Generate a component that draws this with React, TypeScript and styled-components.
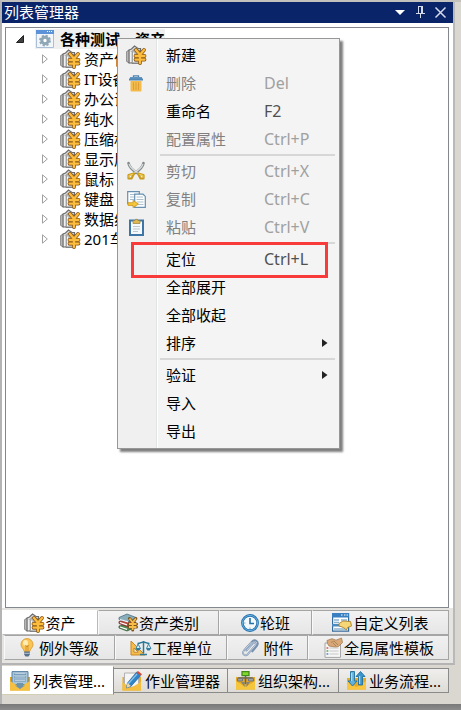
import React from "react";
import styled, { createGlobalStyle, css } from "styled-components";

const GlobalStyle = createGlobalStyle`
  *, *::before, *::after { box-sizing: border-box; }
  body {
    margin: 0;
    background: #dad7d0;
    font-family: "Noto Sans", "Noto Sans CJK SC", sans-serif;
    font-size: 15px;
    line-height: 20px;
    color: #000;
  }
  button {
    font: inherit;
    color: inherit;
    border: 0;
    padding: 0;
    background: none;
    text-align: left;
  }
  ul { list-style: none; margin: 0; padding: 0; }
`;

/* ---------- icons ---------- */

const Svg = styled.svg`
  display: block;
  flex: none;
  overflow: visible;
`;

type IconProps = { size?: number };

const AssetIcon = ({ size = 20 }: IconProps) => (
  <Svg width={size} height={size} viewBox="0 0 20 20" fill="none" aria-hidden="true">
    <path d="M.7 6.500 3.500 5v13L.7 16.500z" fill="#c4c4c4" stroke="#808080" />
    <path d="M3 5 5.500 4 8.500 1l3.500 2.500h2.500V18H3z" fill="#dcdcdc" stroke="#6c6c6c" strokeWidth="1.200" />
    <path d="M6 6.500 8.500 4l5 1.500V18.500H6z" fill="#b9b9b9" stroke="#777" strokeWidth=".8" />
    <path d="M4.800 7v10M7.600 7.500V17" stroke="#f5f5f5" strokeWidth="1.300" />
    <path d="m10 5 4 4.800L18 5M9.500 11h9M9.500 14.600h9M14 10v8" stroke="#8a5716" strokeWidth="3.800" strokeLinejoin="round" strokeLinecap="round" />
    <path d="m10 5 4 4.800L18 5M9.500 11h9M9.500 14.600h9M14 10v8" stroke="#fcbc3c" strokeWidth="2.300" strokeLinejoin="round" strokeLinecap="round" />
  </Svg>
);

const GearWindowIcon = () => (
  <Svg width="18" height="18" viewBox="0 0 18 18" aria-hidden="true">
    <path d="M.5.5h17v17H.5z" fill="#f3f6f9" stroke="#a9bfd8" />
    <path d="M0 0h18v4H0z" fill="#5b92d8" />
    <path d="M11 1.5h1M13 1.5h1M15 1.5h1" stroke="#fff" />
    <circle cx="9" cy="10.500" r="5" fill="none" stroke="#8fa6b5" strokeWidth="1.800" strokeDasharray="2.200 1.720" />
    <circle cx="9" cy="10.500" r="3.200" fill="#fff" stroke="#8fa6b5" strokeWidth="3" />
  </Svg>
);

const TrashIcon = () => (
  <Svg width="14" height="17" viewBox="0 0 14 17" aria-hidden="true">
    <path d="M4.5 2V.8h5V2" fill="none" stroke="#4d83ad" strokeWidth="1.3" />
    <path d="M1 2h12v3H1z" fill="#5e94bf" />
    <path d="M0 3.500h14v2H0z" fill="#4f87b2" />
    <path d="M1.500 6h11v9.500a1 1 0 0 1-1 1h-9a1 1 0 0 1-1-1z" fill="#f3ba4c" />
    <path d="M4.500 7.500V15M7 7.500V15M9.500 7.500V15" stroke="#dc9f35" />
  </Svg>
);

const ScissorsIcon = () => (
  <Svg width="18" height="18" viewBox="0 0 18 18" fill="none" aria-hidden="true">
    <path d="M1.500 1c.5 4 5 8 10 11M16.500 1c-.5 4-5 8-10 11" stroke="#858b8b" strokeWidth="2.600" strokeLinecap="round" />
    <path d="M2 2c1 3 5 6.600 9.400 9.200M16 2c-1 3-5 6.600-9.400 9.200" stroke="#d9dddd" strokeWidth="1.200" />
    <path d="M7 11.500 1.500 13v3.500h3zM11 11.500l5.500 1.500v3.500h-3z" stroke="#c99a1c" strokeWidth="2.200" strokeLinejoin="round" />
    <path d="M6.500 12 2 13.300v2.400M11.500 12l4.500 1.300v2.400" stroke="#f0cd4b" />
  </Svg>
);

const CopyIcon = () => (
  <Svg width="19" height="17" viewBox="0 0 19 17" fill="none" aria-hidden="true">
    <path d="M.7.7h11.600v12H.7z" fill="#fff" stroke="#6790b0" strokeWidth="1.200" />
    <path d="M3 3.500h6M3 6h5M3 8.500h4" stroke="#a9bccb" />
    <path d="M7.7 3.200h8.300l2.300 2.200v10.900H7.700z" fill="#fff" stroke="#6790b0" strokeWidth="1.200" />
    <path d="M9.500 6h6.500M9.500 8.500h7M9.500 11h7M11 13.500h5.500" stroke="#afc0ce" />
    <path d="M1 11.700h5V9.400l5.400 3.700L6 16.600v-2.200H1z" fill="#f7c63a" stroke="#c89416" strokeWidth=".8" />
  </Svg>
);

const PasteIcon = () => (
  <Svg width="15" height="17" viewBox="0 0 15 17" fill="none" aria-hidden="true">
    <path d="M1 1.600h13v14.400H1z" fill="#f6f8f9" stroke="#3d75a6" strokeWidth="2" />
    <path d="M4 7.500h7M4 10h7M4 12.500h5" stroke="#bcc8d1" />
    <path d="M4 1.500h2L6.600.3h1.800L9 1.500h2v3H4z" fill="#dfb850" stroke="#9b8236" strokeWidth=".7" />
  </Svg>
);

const BooksIcon = () => (
  <Svg width="20" height="20" viewBox="0 0 20 20" fill="none" aria-hidden="true">
    <path d="m1 13 9-2 8 3-9 4-8-3z" fill="#4e8b52" stroke="#3b5e3e" strokeWidth=".8" />
    <path d="m1 8.500 9-2 8 3-9 4-8-3z" fill="#b9483d" stroke="#7a332c" strokeWidth=".8" />
    <path d="m2 9.500 7 2.300M2 14l7 2.300" stroke="#fff" strokeWidth="1.300" />
    <path d="M1 4.500 9 1l9 3.500-8 4.500-9-2.500z" fill="#88aebc" stroke="#4c6f80" strokeWidth=".8" />
    <path d="m2 6.500 8 2.300" stroke="#eef4f6" strokeWidth="1.200" />
    <path d="m11.500 5.500 3.200 4 3.200-4M11 11h7.500M11 14h7.500M14.700 10v7" stroke="#7d5119" strokeWidth="3" strokeLinecap="round" />
    <path d="m11.500 5.500 3.200 4 3.200-4M11 11h7.500M11 14h7.500M14.700 10v7" stroke="#f8bd48" strokeWidth="1.800" />
  </Svg>
);

const ClockIcon = () => (
  <Svg width="18" height="18" viewBox="0 0 18 18" fill="none" aria-hidden="true">
    <circle cx="9" cy="9" r="7.600" fill="#f4f9fc" stroke="#236fae" strokeWidth="2.600" />
    <circle cx="9" cy="9" r="7.600" stroke="#65b1df" strokeWidth="1" />
    <path d="M9 4v5.500h4" stroke="#2572aa" strokeWidth="1.600" />
    <path d="M9 13.500V15M3 9h1.500" stroke="#80aac6" />
  </Svg>
);

const ListEditIcon = () => (
  <Svg width="20" height="19" viewBox="0 0 20 19" fill="none" aria-hidden="true">
    <path d="M.6.600h16v17.500H.6z" fill="#fff" stroke="#356b9b" strokeWidth="1.200" />
    <path d="M0 0h17v4.500H0z" fill="#397fc1" />
    <path d="M9 2h1.500M12 2h1.500M14.500 2H16" stroke="#fff" />
    <path d="M2 7h5M9 7h6M2 9.500h5M2 16h13" stroke="#8cb2d1" strokeWidth="1.300" />
    <path d="M0 11h8v2.500H0z" fill="#4b8ac3" />
    <path d="M7 10.500 11 8l7.500.5 1 4.500-4 1.500-1 2.500-3-2.500L7 13z" fill="#f6d676" stroke="#a88029" strokeWidth=".9" />
  </Svg>
);

const BulbIcon = () => (
  <Svg width="14" height="19" viewBox="0 0 14 19" fill="none" aria-hidden="true">
    <path d="M7 .600a6 6 0 0 0-6 6c0 3 3 4.400 3.300 7h5.400c.3-2.600 3.300-4 3.300-7a6 6 0 0 0-6-6z" fill="#f9c554" stroke="#dda23a" />
    <ellipse cx="5.500" cy="5" rx="2.500" ry="3" fill="#ffebb3" />
    <path d="m5 7 1.500 2L7 7.500 7.500 9 9 7M6 9v4M8 9v4" stroke="#c47c1c" strokeWidth=".7" />
    <path d="M4.200 13.500h5.600v3L8.500 18.500h-3l-1.300-2z" fill="#566f8a" />
    <path d="M4.200 15.300h5.600" stroke="#b6c5d3" />
  </Svg>
);

const UnitsIcon = () => (
  <Svg width="21" height="16" viewBox="0 0 21 16" fill="none" aria-hidden="true">
    <path d="M1 1v14h14z" fill="#f6bb48" stroke="#c98726" />
    <path d="M4 8v4.200h4.200z" fill="#f2f2f2" stroke="#c98726" />
    <path d="M13.500 1v12M10 14.500h7M7.500 3.500c3 0 4-1.500 6-1.500s3 1.500 6 1.500" stroke="#2b7899" strokeWidth="1.500" />
    <path d="m8 4-2 4.500h4.500zM18.500 4l-2 4.500H21z" fill="#d8edf4" stroke="#3d8aa8" />
    <path d="M5.500 8.500h5.300L9 10.500H7zM16 8.500h5l-1.500 2h-2z" fill="#2b7899" />
  </Svg>
);

const ClipIcon = () => (
  <Svg width="17" height="18" viewBox="0 0 17 18" fill="none" aria-hidden="true">
    <path d="M4.500 11.500 11 4.300c1.800-1.800 3.800.3 2.300 2.200l-7.500 8.600c-2.600 2.800-6.500-.3-4-3.400L9.500 3c3.300-3.800 8.500-.3 5.400 4l-4.500 5.500" stroke="#7890af" strokeWidth="1.800" strokeLinecap="round" />
    <path d="M4.500 11.500 11 4.300c1.800-1.800 3.800.3 2.300 2.200l-7.500 8.600c-2.600 2.800-6.500-.3-4-3.400L9.500 3" stroke="#d9e3ef" strokeWidth=".8" />
  </Svg>
);

const TemplateIcon = () => (
  <Svg width="20" height="20" viewBox="0 0 20 20" fill="none" aria-hidden="true">
    <path d="M2 5h15.500v14.400H2z" fill="#f6f6f6" stroke="#a6a6a6" />
    <path d="M6.500 10h9M6.500 13h9M6.500 16h9" stroke="#c8c8c8" />
    <path d="M3.500 10h1.800" stroke="#d25555" strokeWidth="1.500" />
    <path d="M3.500 13h1.800" stroke="#5aa35e" strokeWidth="1.500" />
    <path d="M3.500 16h1.800" stroke="#5c82c0" strokeWidth="1.500" />
    <path d="m4 2.500 5-1.800 4 1.500L18.500 0l1 4.500-4 4-3 .5-6.500-1-1.500-2.500z" fill="#d9a878" stroke="#a67a50" strokeWidth=".8" />
    <path d="m8 4.500 3-1.500 4 4M10 5l3 3" stroke="#a67a50" strokeWidth=".8" />
  </Svg>
);

const ListManagerIcon = () => (
  <Svg width="20" height="20" viewBox="0 0 20 20" fill="none" aria-hidden="true">
    <path d="M0 6h20v13.500H0z" fill="#e3a51f" />
    <path d="M2 .6h16v13H2z" fill="#a9c5da" stroke="#557f9f" />
    <path d="M4 3h12M4 6.300h12M4 9.600h12" stroke="#6790b0" strokeWidth="2" />
    <path d="M4.500 2.700h11M4.500 6h11M4.500 9.300h11" stroke="#e8f1f6" strokeWidth=".8" />
    <path d="m0 10 10 6 10-6v9.500H0z" fill="#f5c040" />
    <path d="M7 12h6v2.500h2L10 18 5 14.500h2z" fill="#6e94ad" />
  </Svg>
);

const JobManagerIcon = () => (
  <Svg width="20" height="20" viewBox="0 0 20 20" fill="none" aria-hidden="true">
    <path d="M.5 6h18.500v13.500H.500z" fill="#e9ad27" />
    <path d="M2.500 2h14v14h-14z" fill="#f5f5f5" stroke="#b2b2b2" />
    <path d="m.5 11 8 6 10.500-6v8.500H.5z" fill="#f4bf40" />
    <path d="m14.500 1.200 4 3.500-9.500 10.500-4.500 1.800 1-5z" fill="#3085c9" stroke="#1d5f98" strokeWidth=".7" />
    <path d="m15 3-9 10" stroke="#8cc5ec" strokeWidth="1.200" />
    <path d="m14.500 1.200 1.500-1.200 4 3.300-1.500 1.500z" fill="#d84835" />
    <path d="m5.500 12 3.500 3-4.500 2z" fill="#f4d5a7" />
  </Svg>
);

const OrgIcon = () => (
  <Svg width="19" height="19" viewBox="0 0 19 19" fill="none" aria-hidden="true">
    <path d="M0 6h19v12.500H0z" fill="#e6a721" />
    <path d="m0 10 9.500 6 9.500-6v8.500H0z" fill="#f5c63c" />
    <path d="M9.500 4v9M3 9.500V7h13v2.500" stroke="#666" strokeWidth="1.500" />
    <path d="M6 .7h7v4H6z" fill="#83d62b" stroke="#438b18" strokeWidth="1.300" />
    <path d="M1.500 7.500h5V10h-5zM12.500 7.500h5V10h-5z" fill="#9ea3a0" stroke="#777" />
    <path d="M5 11h3.500v5zM14 11h-3.500v5z" fill="#7c8584" />
  </Svg>
);

const FlowIcon = () => (
  <Svg width="19" height="19" viewBox="0 0 19 19" fill="none" aria-hidden="true">
    <path d="M0 7h19v11.500H0z" fill="#e9aa24" />
    <path d="m0 10 9.500 6 9.500-6v8.500H0z" fill="#f7c540" />
    <path d="M3.500.5h4v9.500H10l-4.500 5L1 10h2.500z" fill="#5fb2dd" stroke="#24719f" strokeWidth=".9" />
    <path d="M11.500 14V5.500H9l4.500-5 4.500 5h-2.500V14z" fill="#3995cb" stroke="#24719f" strokeWidth=".9" />
    <path d="M4.700 2v8M12.700 5v8" stroke="#bfe4f5" />
  </Svg>
);

/* ---------- window ---------- */

const Workspace = styled.main`
  position: relative;
  display: flex;
  flex-direction: column;
  min-height: 100vh;
  border-left: 2px solid #b4b4b4;
  border-top: 2px solid #c3c1bd;
`;

const DockPanel = styled.section`
  flex: 1;
  display: flex;
  flex-direction: column;
  margin-right: 6px;
  border-right: 2px solid #b9b9b9;
  border-bottom: 2px solid #b4b4b4;
  background: #fff;
`;

const TitleBar = styled.header`
  display: flex;
  align-items: center;
  justify-content: space-between;
  height: 21px;
  padding: 0 7px 1px 2px;
  color: #fff;
  background: #0a246a;
`;

const Title = styled.h1`
  margin: 0;
  font-size: 15px;
  line-height: 20px;
  font-weight: 400;
`;

const TitleActions = styled.div`
  display: flex;
  align-items: center;
  gap: 8px;
`;

const TitleButton = styled.button`
  display: grid;
  place-items: center;
  width: 12px;
  height: 20px;
`;

/* ---------- tree ---------- */

const TreePane = styled.div`
  flex: 1;
  margin: 4px 4px 0 3px;
  padding: 1px 0;
  border: 1px solid #828790;
  background: #fff;
  overflow: hidden;
`;

const TreeRow = styled.li<{ $root?: boolean }>`
  display: flex;
  align-items: center;
  height: 20px;
  padding-left: ${(p) => (p.$root ? 7 : 32)}px;
`;

const Toggle = styled.button`
  display: grid;
  place-items: center;
  width: 14px;
  height: 20px;
  flex: none;
`;

const TreeLabel = styled.button<{ $root?: boolean }>`
  display: flex;
  align-items: center;
  height: 20px;
  gap: 4px;
  margin-left: 8px;
  white-space: nowrap;
  ${(p) =>
    p.$root &&
    css`
      gap: 6px;
      padding-left: 1px;
      font-weight: 700;
      background: #f0f0f0;
    `}
`;

/* ---------- tab strips ---------- */

const TabArea = styled.div`
  padding: 2px 0 3px;
  background: #e6e4e1;
`;

const TabRow = styled.div<{ $columns: string; $inset?: boolean }>`
  display: grid;
  grid-template-columns: ${(p) => p.$columns};
  margin-right: 4px;
  margin-left: ${(p) => (p.$inset ? 2 : 0)}px;
`;

const Tab = styled.button<{ $active?: boolean }>`
  display: flex;
  align-items: center;
  justify-content: center;
  gap: 1px;
  height: 25px;
  min-width: 0;
  white-space: nowrap;
  border: 1px solid #a5a5a5;
  border-left-color: #f9f9f9;
  background: linear-gradient(#f1f1f1, #e6e6e6);
  ${(p) =>
    p.$active &&
    css`
      background: #fff;
      border-color: #fff #b9b9b9 #b9b9b9 #fff;
    `}
`;

const DockTabs = styled.nav`
  display: grid;
  grid-template-columns: 112fr 114fr 111fr 110fr;
  align-items: center;
  margin: 1px 12px 0 0;
  height: 29px;
`;

const DockTab = styled.button<{ $active?: boolean }>`
  display: flex;
  align-items: center;
  gap: 3px;
  height: 25px;
  min-width: 0;
  padding-left: 8px;
  white-space: nowrap;
  border: 1px solid #8a8a8a;
  border-left: 0;
  background: linear-gradient(#f0efed, #dedbd6);
  ${(p) =>
    p.$active &&
    css`
      height: 29px;
      background: #fff;
      border-color: #fff #8a8a8a #d2cfb4 #fff;
    `}
`;

const StatusStrip = styled.footer`
  height: 6px;
  margin: 9px 0 0 -2px;
  background: linear-gradient(#797979, #8c8c8c);
`;

/* ---------- context menu ---------- */

const Menu = styled.div`
  position: absolute;
  top: 36px;
  left: 115px;
  width: 223px;
  padding: 2px 2px 3px;
  border: 1px solid #979797;
  background: linear-gradient(to right, #f0f0f0 38px, #e2e3e3 38px, #e2e3e3 39px, #fff 39px, #fff 40px, #f4f4f4 40px);
  box-shadow: 3px 3px 2px rgba(0, 0, 0, 0.5);
`;

const MenuItem = styled.button<{ $marked?: boolean }>`
  position: relative;
  display: grid;
  grid-template-columns: 32px 1fr 58px 15px;
  align-items: center;
  width: 100%;
  height: 28px;
  color: #000;
  &:disabled {
    color: #808080;
  }
  ${(p) =>
    p.$marked &&
    css`
      &::after {
        content: "";
        position: absolute;
        inset: -3px 9px -5px 11px;
        border: 3px solid #f93a3a;
        z-index: 1;
      }
    `}
`;

const IconSlot = styled.span`
  display: grid;
  place-items: center;
`;

const MenuLabel = styled.span`
  padding-left: 14px;
`;

const Shortcut = styled.span<{ $dim?: boolean }>`
  font-size: 16px;
  color: ${(p) => (p.$dim ? "#a0a0a0" : "#505050")};
`;

const Separator = styled.hr`
  height: 2px;
  margin: 1px 2px 1px 40px;
  border: 0;
  background: #d7d7d7;
`;

type Entry = {
  label: string;
  keys?: string;
  icon?: React.ReactNode;
  disabled?: boolean;
  submenu?: boolean;
  marked?: boolean;
};

const menuGroups: Entry[][] = [
  [
    { label: "新建", icon: <AssetIcon /> },
    { label: "删除", keys: "Del", icon: <TrashIcon />, disabled: true },
    { label: "重命名", keys: "F2" },
    { label: "配置属性", keys: "Ctrl+P", disabled: true },
  ],
  [
    { label: "剪切", keys: "Ctrl+X", icon: <ScissorsIcon />, disabled: true },
    { label: "复制", keys: "Ctrl+C", icon: <CopyIcon />, disabled: true },
    { label: "粘贴", keys: "Ctrl+V", icon: <PasteIcon />, disabled: true },
  ],
  [
    { label: "定位", keys: "Ctrl+L", marked: true },
    { label: "全部展开" },
    { label: "全部收起" },
    { label: "排序", submenu: true },
  ],
  [{ label: "验证", submenu: true }, { label: "导入" }, { label: "导出" }],
];

const treeItems = ["资产信息", "IT设备", "办公设备", "纯水", "压缩机", "显示屏", "鼠标", "键盘", "数据线", "201车间"];

export default function App() {
  return (
    <>
      <GlobalStyle />
      <Workspace>
        <DockPanel>
          <TitleBar>
            <Title>列表管理器</Title>
            <TitleActions>
              <TitleButton aria-label="选项">
                <Svg width="10" height="5" viewBox="0 0 10 5"><path d="M0 0h10L5 5z" fill="#fff" /></Svg>
              </TitleButton>
              <TitleButton aria-label="固定">
                <Svg width="9" height="12" viewBox="0 0 9 12" fill="none" stroke="#d5daea">
                  <path d="M2 .5h5M2.500 0v7M6.500 0v7M5.500 0v7M0 7.500h9M4.500 8v4" />
                </Svg>
              </TitleButton>
              <TitleButton aria-label="关闭">
                <Svg width="11" height="11" viewBox="0 0 11 11"><path d="m.5.500 10 10m0-10-10 10" stroke="#d5daea" strokeWidth="1.500" /></Svg>
              </TitleButton>
            </TitleActions>
          </TitleBar>

          <TreePane>
            <ul>
              <TreeRow $root>
                <Toggle aria-label="收起">
                  <Svg width="8" height="8" viewBox="0 0 8 8"><path d="M7.500.500v7h-7z" fill="#404040" stroke="#222" /></Svg>
                </Toggle>
                <TreeLabel $root><GearWindowIcon />各种测试一资产</TreeLabel>
              </TreeRow>
              {treeItems.map((name) => (
                <TreeRow key={name}>
                  <Toggle aria-label={`展开 ${name}`}>
                    <Svg width="6" height="10" viewBox="0 0 6 10"><path d="M.5.800v8.400L5.300 5z" fill="#fff" stroke="#a0a0a0" /></Svg>
                  </Toggle>
                  <TreeLabel><AssetIcon />{name}</TreeLabel>
                </TreeRow>
              ))}
            </ul>
          </TreePane>

          <TabArea>
            <TabRow $columns="96fr 121fr 93fr 137fr">
              <Tab $active><AssetIcon />资产</Tab>
              <Tab><BooksIcon />资产类别</Tab>
              <Tab><ClockIcon />轮班</Tab>
              <Tab><ListEditIcon />自定义列表</Tab>
            </TabRow>
            <TabRow $columns="111fr 112fr 81fr 141fr" $inset>
              <Tab><BulbIcon />&nbsp;例外等级</Tab>
              <Tab><UnitsIcon />工程单位</Tab>
              <Tab><ClipIcon />&nbsp;附件</Tab>
              <Tab><TemplateIcon />全局属性模板</Tab>
            </TabRow>
          </TabArea>
        </DockPanel>

        <DockTabs>
          <DockTab $active><ListManagerIcon />列表管理...</DockTab>
          <DockTab><JobManagerIcon />作业管理器</DockTab>
          <DockTab><OrgIcon />组织架构...</DockTab>
          <DockTab><FlowIcon />业务流程...</DockTab>
        </DockTabs>
        <StatusStrip />

        <Menu>
          {menuGroups.map((group, index) => (
            <React.Fragment key={group[0].label}>
              {index > 0 && <Separator />}
              {group.map((item) => (
                <MenuItem key={item.label} disabled={item.disabled} $marked={item.marked}>
                  <IconSlot>{item.icon}</IconSlot>
                  <MenuLabel>{item.label}</MenuLabel>
                  <Shortcut $dim={item.disabled}>{item.keys}</Shortcut>
                  {item.submenu && (
                    <Svg width="6" height="8" viewBox="0 0 6 8"><path d="M0 0v8l5.500-4z" fill="#222" /></Svg>
                  )}
                </MenuItem>
              ))}
            </React.Fragment>
          ))}
        </Menu>
      </Workspace>
    </>
  );
}
